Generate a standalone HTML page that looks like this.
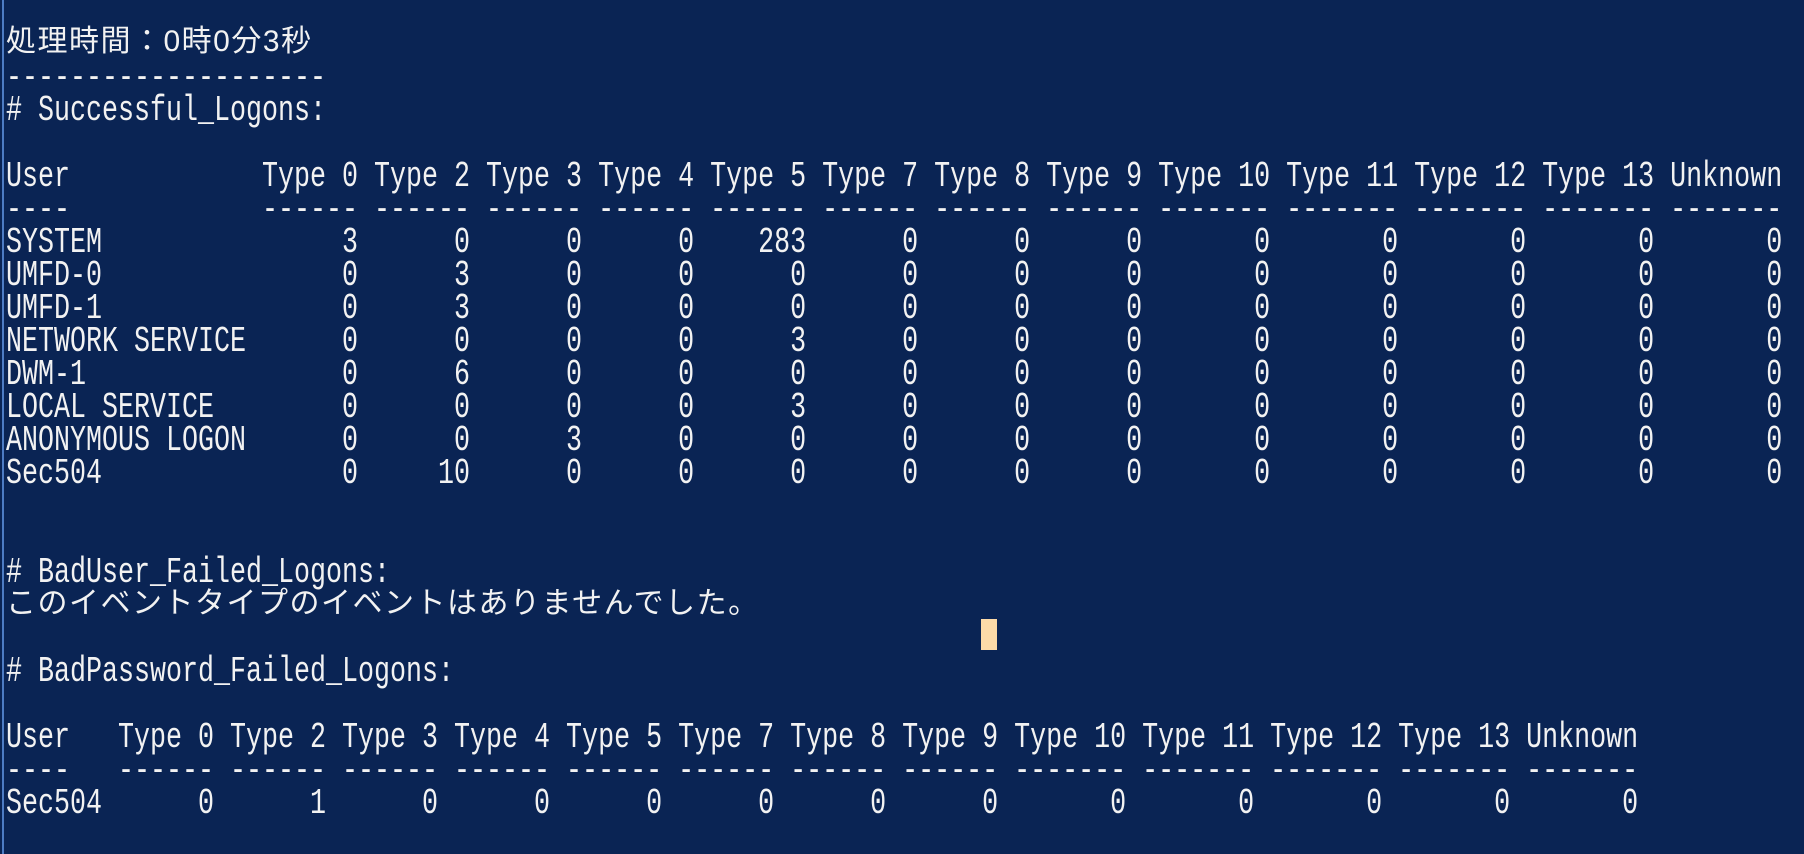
<!DOCTYPE html>
<html><head><meta charset="utf-8"><style>
html,body{margin:0;padding:0;}
body{width:1804px;height:854px;background:#0a2454;position:relative;overflow:hidden;}
.bl{position:absolute;left:2px;top:0;width:2px;height:854px;background:#4d7cc4;}
pre{position:absolute;left:6px;top:28px;margin:0;font-family:"Liberation Mono",monospace;font-size:36px;line-height:33px;color:#f2f2f2;transform:scaleX(0.7407);transform-origin:0 0;white-space:pre;}
.jp{position:absolute;left:6px;font-family:"Liberation Sans","Noto Sans CJK JP",sans-serif;font-size:30px;line-height:33px;color:#f2f2f2;letter-spacing:1.5px;white-space:pre;}
.cur{position:absolute;left:981px;top:619px;width:16px;height:31px;background:#fcdaa8;}
</style></head><body>
<div class="bl"></div>
<div class="jp" style="top:25px">処理時間：0時0分3秒</div>
<pre>

--------------------
# Successful_Logons:

User            Type 0 Type 2 Type 3 Type 4 Type 5 Type 7 Type 8 Type 9 Type 10 Type 11 Type 12 Type 13 Unknown
----            ------ ------ ------ ------ ------ ------ ------ ------ ------- ------- ------- ------- -------
SYSTEM               3      0      0      0    283      0      0      0       0       0       0       0       0
UMFD-0               0      3      0      0      0      0      0      0       0       0       0       0       0
UMFD-1               0      3      0      0      0      0      0      0       0       0       0       0       0
NETWORK SERVICE      0      0      0      0      3      0      0      0       0       0       0       0       0
DWM-1                0      6      0      0      0      0      0      0       0       0       0       0       0
LOCAL SERVICE        0      0      0      0      3      0      0      0       0       0       0       0       0
ANONYMOUS LOGON      0      0      3      0      0      0      0      0       0       0       0       0       0
Sec504               0     10      0      0      0      0      0      0       0       0       0       0       0


# BadUser_Failed_Logons:


# BadPassword_Failed_Logons:

User   Type 0 Type 2 Type 3 Type 4 Type 5 Type 7 Type 8 Type 9 Type 10 Type 11 Type 12 Type 13 Unknown
----   ------ ------ ------ ------ ------ ------ ------ ------ ------- ------- ------- ------- -------
Sec504      0      1      0      0      0      0      0      0       0       0       0       0       0
</pre>
<div class="jp" style="top:587px">このイベントタイプのイベントはありませんでした。</div>
<div class="cur"></div>
</body></html>
